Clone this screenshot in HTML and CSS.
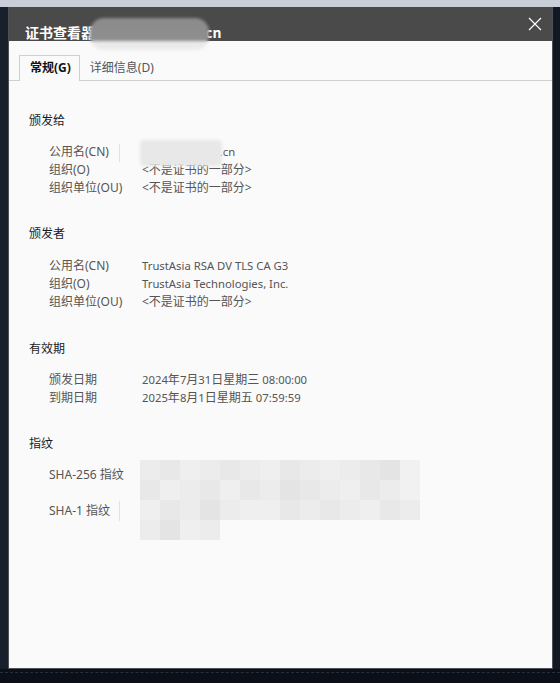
FILE: index.html
```html
<!DOCTYPE html>
<html lang="zh-CN">
<head>
<meta charset="utf-8">
<title>证书查看器</title>
<link rel="stylesheet" href="styles.css">
</head>
<body>
<div class="topstrip"></div>
<div class="middle">
  <div class="side-left"></div>
  <div class="dialog">
    <div class="titlebar">
      <span class="title">证书查看器<span class="masked"> - example.com.</span>cn</span>
      <svg class="close" width="14" height="14" viewBox="0 0 14 14"><path d="M1 1 L13 13 M13 1 L1 13" stroke="#ffffff" stroke-width="1.2" fill="none"/></svg>
      <div class="blur-title"></div>
    </div>
    <div class="content">
      <div class="tabs">
        <div class="tab active">常规(G)</div>
        <div class="tab">详细信息(D)</div>
      </div>
      <div class="section s1">
        <div class="heading">颁发给</div>
        <div class="rows">
          <div class="row"><span class="label">公用名(CN)</span><span class="value lt">xxxxxxxxxxxxx.cn</span></div>
          <div class="row"><span class="label">组织(O)</span><span class="value">&lt;不是证书的一部分&gt;</span></div>
          <div class="row"><span class="label">组织单位(OU)</span><span class="value">&lt;不是证书的一部分&gt;</span></div>
        </div>
        <div class="blur-cn"></div>
        <div class="caret caret-cn"></div>
      </div>
      <div class="section s2">
        <div class="heading">颁发者</div>
        <div class="rows">
          <div class="row"><span class="label">公用名(CN)</span><span class="value lt">TrustAsia RSA DV TLS CA G3</span></div>
          <div class="row"><span class="label">组织(O)</span><span class="value lt">TrustAsia Technologies, Inc.</span></div>
          <div class="row"><span class="label">组织单位(OU)</span><span class="value">&lt;不是证书的一部分&gt;</span></div>
        </div>
      </div>
      <div class="section s3">
        <div class="heading">有效期</div>
        <div class="rows">
          <div class="row"><span class="label">颁发日期</span><span class="value"><span class="lt">2024</span>年<span class="lt">7</span>月<span class="lt">31</span>日星期三<span class="lt"> 08:00:00</span></span></div>
          <div class="row"><span class="label">到期日期</span><span class="value"><span class="lt">2025</span>年<span class="lt">8</span>月<span class="lt">1</span>日星期五<span class="lt"> 07:59:59</span></span></div>
        </div>
      </div>
      <div class="section s4">
        <div class="heading">指纹</div>
        <div class="rows wide">
          <div class="row"><span class="label">SHA-256 指纹</span><span class="value"></span></div>
          <div class="row"><span class="label">SHA-1 指纹</span><span class="value"></span></div>
        </div>
        <div class="caret caret-fp"></div>
        <div class="mosaic">
          <i class="a"></i><i class="b"></i><i class="c"></i><i class="a"></i><i class="b"></i><i class="a"></i><i class="c"></i><i class="b"></i><i class="a"></i><i class="c"></i><i class="a"></i><i class="b"></i><i class="d"></i><i class="e"></i>
          <i class="b"></i><i class="c"></i><i class="a"></i><i class="b"></i><i class="c"></i><i class="b"></i><i class="a"></i><i class="d"></i><i class="b"></i><i class="a"></i><i class="c"></i><i class="b"></i><i class="a"></i><i class="e"></i>
          <i class="c"></i><i class="b"></i><i class="a"></i><i class="d"></i><i class="a"></i><i class="c"></i><i class="c"></i><i class="b"></i><i class="a"></i><i class="b"></i><i class="a"></i><i class="c"></i><i class="b"></i><i class="a"></i>
          <i class="a"></i><i class="d"></i><i class="c"></i><i class="a"></i>
        </div>
      </div>
    </div>
  </div>
  <div class="side-right"></div>
</div>
<div class="bottom"></div>
</body>
</html>
```
FILE: styles.css
```css
html, body {
  margin: 0;
  padding: 0;
}
body {
  width: 560px;
  height: 683px;
  overflow: hidden;
  background: #0c0f18;
  font-family: "Noto Sans", "Noto Sans CJK SC", sans-serif;
  font-size: 12px;
}
.topstrip {
  height: 7px;
  background: #c9ced8;
}
.middle {
  display: flex;
  height: 662px;
}
.side-left {
  width: 8px;
  background: #18202c;
}
.side-right {
  flex: 1;
  background: #131924;
}
.dialog {
  width: 545px;
  box-sizing: border-box;
  border: 1px solid #4e5156;
  border-top: none;
  display: flex;
  flex-direction: column;
  background: #fafafa;
}
.titlebar {
  position: relative;
  height: 34px;
  background: #4a4a4a;
  box-sizing: border-box;
  padding: 15px 0 0 16px;
  display: flex;
  align-items: flex-start;
}
.title {
  color: #ffffff;
  font-weight: bold;
  font-size: 14px;
  line-height: 20px;
  font-family: "Noto Sans CJK SC", sans-serif;
  white-space: nowrap;
}
.masked {
  display: inline-block;
  width: 110px;
  overflow: hidden;
  vertical-align: top;
  color: transparent;
}
.close {
  position: absolute;
  right: 10px;
  top: 10px;
}
.blur-title {
  position: absolute;
  z-index: 2;
  left: 81px;
  top: 11px;
  width: 119px;
  height: 32px;
  border-radius: 14px;
  overflow: hidden;
  filter: blur(1.5px);
  background: linear-gradient(180deg, #8b8b8b 0, #8e8e8e 23px, #e8e8e8 23px, #ececec 100%);
}
.content {
  flex: 1;
  position: relative;
  background: #fafafa;
}
.tabs {
  margin-top: 14px;
  display: flex;
  border-bottom: 1px solid #cfcfcf;
  height: 25px;
  padding-left: 10px;
}
.tab {
  height: 25px;
  box-sizing: border-box;
  line-height: 24px;
  padding: 1px 10px 0 10px;
  color: #555;
  font-size: 12px;
}
.tab.active {
  color: #111;
  font-weight: bold;
  border: 1px solid #cfcfcf;
  border-bottom: none;
  background: #fafafa;
  height: 26px;
  padding: 0 8px 0 10px;
}
.section {
  position: relative;
  padding-left: 20px;
}
.s1 { margin-top: 31px; }
.s2 { margin-top: 28px; }
.s3 { margin-top: 29px; }
.s4 { margin-top: 28px; }
.heading {
  line-height: 18px;
  color: #1a1a1a;
}
.rows {
  margin-top: 13px;
  padding-left: 20px;
  display: flex;
  flex-direction: column;
}
.s2 .rows { margin-top: 14px; }
.rows.wide {
  gap: 18px;
}
.row {
  display: flex;
  line-height: 18px;
  height: 18px;
}
.label {
  width: 93px;
  color: #555;
}
.value {
  color: #555;
  white-space: pre;
}
.lt {
  font-size: 11.3px;
}
.blur-cn {
  position: absolute;
  left: 131px;
  top: 28px;
  width: 82px;
  height: 26px;
  background: #e8e8e8;
  border-radius: 4px;
  filter: blur(1.5px);
}
.caret {
  position: absolute;
  width: 1px;
  background: #e2e2e2;
}
.caret-cn {
  left: 110px;
  top: 32px;
  height: 18px;
}
.caret-fp {
  left: 110px;
  top: 66px;
  height: 20px;
}
.mosaic {
  position: absolute;
  left: 131px;
  top: 25px;
  width: 280px;
  display: grid;
  grid-template-columns: repeat(14, 20px);
  grid-auto-rows: 20px;
}
.mosaic i { display: block; }
.mosaic .a { background: #ececec; }
.mosaic .b { background: #e8e8e8; }
.mosaic .c { background: #efefef; }
.mosaic .d { background: #e4e4e4; }
.mosaic .e { background: #f1f1f1; }
.bottom {
  height: 14px;
  background: #0c0f18;
  border-top: 1px dashed #253040;
  box-sizing: border-box;
  margin-top: 3px;
}
```
